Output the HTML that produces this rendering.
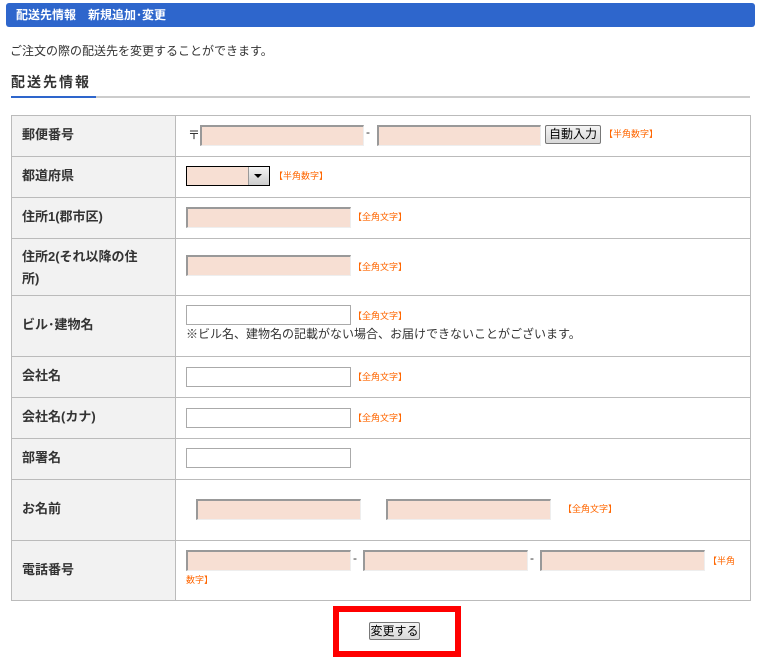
<!DOCTYPE html>
<html><head><meta charset="utf-8"><style>
*{margin:0;padding:0;box-sizing:border-box}
body{width:770px;height:664px;background:#fff;position:relative;font-family:"Liberation Sans","Noto Sans CJK JP",sans-serif;font-size:12px;color:#333;overflow:hidden}
.a{position:absolute;white-space:nowrap}
.hd{left:6px;top:3px;width:749px;height:24px;background:#2e66cc;border-radius:3px;color:#fff;font-weight:bold;font-size:12px;line-height:24px;padding-left:10px}
.tb{left:11px;top:115px;width:740px;height:486px;border:1px solid #bbb}
.lab{position:absolute;left:0;width:164px;background:#f2f2f2;border-right:1px solid #bbb}
.hl{position:absolute;left:0;width:738px;height:1px;background:#bbb}
.lt{font-weight:bold;font-size:13px;color:#333;line-height:18px}
.p{position:absolute;height:21px;background:#f7dfd3;border-top:2px solid #999;border-left:2px solid #999;border-right:1px solid #eee;border-bottom:1px solid #eee}
.w{position:absolute;height:20px;background:#fff;border:1px solid #aaa}
.n{position:absolute;color:#ff6600;font-size:9px;line-height:12px;white-space:nowrap}
.btn{position:absolute;white-space:nowrap;background:linear-gradient(#f4f4f4,#d8d8d8);border:1px solid #777;border-radius:2px;font-size:12px;color:#000;text-align:center;line-height:16px}
</style></head><body>
<div class="a hd">配送先情報　新規追加･変更</div>
<div class="a" style="left:10px;top:43px;font-size:12px;line-height:16px">ご注文の際の配送先を変更することができます。</div>
<div class="a" style="left:11px;top:72px;font-size:14px;font-weight:bold;letter-spacing:2px;color:#333;line-height:20px">配送先情報</div>
<div class="a" style="left:11px;top:96px;width:739px;height:2px;background:#ccc"></div>
<div class="a" style="left:11px;top:96px;width:85px;height:2px;background:#2e66cc"></div>
<div class="a tb">
<div class="lab" style="top:0;height:484px"></div>
<div class="hl" style="top:40px"></div><div class="hl" style="top:81px"></div><div class="hl" style="top:122px"></div><div class="hl" style="top:179px"></div><div class="hl" style="top:240px"></div><div class="hl" style="top:281px"></div><div class="hl" style="top:322px"></div><div class="hl" style="top:363px"></div><div class="hl" style="top:424px"></div>
</div>
<div class="a lt" style="left:22px;top:126px">郵便番号</div>
<div class="a lt" style="left:22px;top:167px">都道府県</div>
<div class="a lt" style="left:22px;top:208px">住所1(郡市区)</div>
<div class="a lt" style="left:22px;top:246px;line-height:22px">住所2(それ以降の住<br>所)</div>
<div class="a lt" style="left:22px;top:316px">ビル･建物名</div>
<div class="a lt" style="left:22px;top:367px">会社名</div>
<div class="a lt" style="left:22px;top:408px">会社名(カナ)</div>
<div class="a lt" style="left:22px;top:449px">部署名</div>
<div class="a lt" style="left:22px;top:500px">お名前</div>
<div class="a lt" style="left:22px;top:561px">電話番号</div>

<div class="a" style="left:188px;top:126px">〒</div>
<div class="p" style="left:200px;top:125px;width:164px"></div>
<div class="a" style="left:366px;top:125px">-</div>
<div class="p" style="left:377px;top:125px;width:164px"></div>
<div class="btn" style="left:545px;top:125px;width:56px;height:19px">自動入力</div>
<div class="n" style="left:604px;top:128px">【半角数字】</div>

<div class="a" style="left:186px;top:166px;width:84px;height:20px;border:1px solid #000;background:#f7dfd3"></div>
<div class="a" style="left:248px;top:167px;width:21px;height:18px;background:linear-gradient(#f4f4f4,#ccc);border-left:1px solid #999"></div>
<div class="a" style="left:254px;top:174px;width:0;height:0;border-left:4px solid transparent;border-right:4px solid transparent;border-top:4px solid #000"></div>
<div class="n" style="left:274px;top:170px">【半角数字】</div>

<div class="p" style="left:186px;top:207px;width:165px"></div>
<div class="n" style="left:353px;top:211px">【全角文字】</div>
<div class="p" style="left:186px;top:255px;width:165px"></div>
<div class="n" style="left:353px;top:261px">【全角文字】</div>
<div class="w" style="left:186px;top:305px;width:165px"></div>
<div class="n" style="left:353px;top:310px">【全角文字】</div>
<div class="a" style="left:186px;top:326px;line-height:16px">※ビル名、建物名の記載がない場合、お届けできないことがございます。</div>
<div class="w" style="left:186px;top:367px;width:165px"></div>
<div class="n" style="left:353px;top:371px">【全角文字】</div>
<div class="w" style="left:186px;top:408px;width:165px"></div>
<div class="n" style="left:353px;top:412px">【全角文字】</div>
<div class="w" style="left:186px;top:448px;width:165px"></div>

<div class="p" style="left:196px;top:499px;width:165px"></div>
<div class="p" style="left:386px;top:499px;width:165px"></div>
<div class="n" style="left:563px;top:503px">【全角文字】</div>

<div class="p" style="left:186px;top:550px;width:165px"></div>
<div class="a" style="left:353px;top:551px">-</div>
<div class="p" style="left:363px;top:550px;width:165px"></div>
<div class="a" style="left:530px;top:551px">-</div>
<div class="p" style="left:540px;top:550px;width:165px"></div>
<div class="n" style="left:708px;top:555px">【半角</div>
<div class="n" style="left:186px;top:574px">数字】</div>

<div class="a" style="left:333px;top:606px;width:128px;height:51px;border:6px solid #ff0000"></div>
<div class="btn" style="left:369px;top:622px;width:51px;height:18px">変更する</div>
</body></html>
